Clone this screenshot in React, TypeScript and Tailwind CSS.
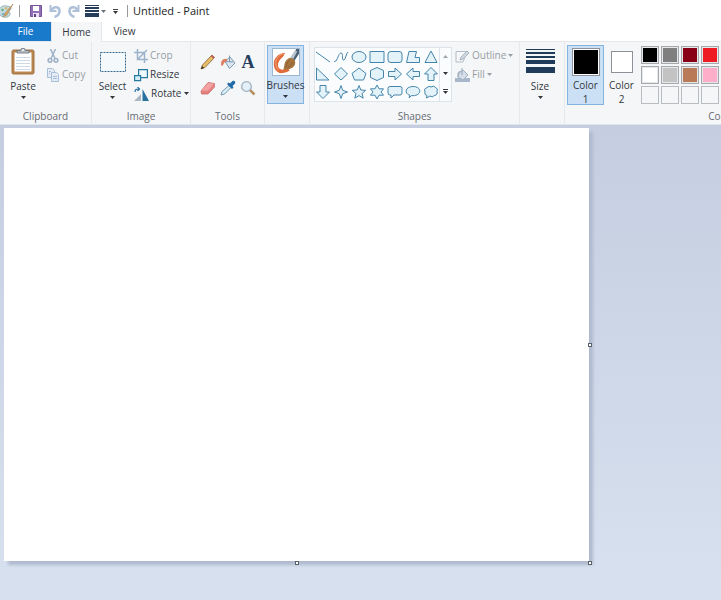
import type { ReactNode } from "react";

const shapes = [
  "M1 3 L15 13",
  "M1 12 C4 15 5 4 8 4 C11 4 8 12 11 11 C13 10 13 4 15 3",
  "M1 8 A7 5.5 0 1 0 15 8 A7 5.5 0 1 0 1 8 Z",
  "M1 2.5 H15 V13.5 H1 Z",
  "M4 2.5 H12 Q15 2.5 15 5 V11 Q15 13.5 12 13.5 H4 Q1 13.5 1 11 V5 Q1 2.5 4 2.5 Z",
  "M4 2.5 H11.5 L10 8.5 H14.5 V13.5 H1.500 Z",
  "M8 2 L14 13.5 H2 Z",
  "M1.500 2 L14 14 H1.500 Z",
  "M8 1.5 L14.5 8 L8 14 L1.500 8 Z",
  "M8 2 L15 7.500 L12.500 14 H3.500 L1 7.500 Z",
  "M8 1.500 L14.500 4.500 V11.500 L8 14.500 L1.500 11.500 V4.500 Z",
  "M1.500 5.500 H8 V2 L14.500 8 L8 14 V10.500 H1.500 Z",
  "M14.500 5.500 H8 V2 L1.500 8 L8 14 V10.500 H14.500 Z",
  "M8 1.500 L14.500 8 H11 V14.500 H5 V8 H1.500 Z",
  "M8 14.500 L14.500 8 H11 V1.500 H5 V8 H1.500 Z",
  "M8 1.500 L9.700 6.300 L14.500 8 L9.700 9.700 L8 14.500 L6.300 9.700 L1.500 8 L6.300 6.300 Z",
  "M8 1.500 L9.800 6 L14.700 6.300 L11 9.500 L12.200 14.200 L8 11.600 L3.800 14.200 L5 9.500 L1.300 6.300 L6.200 6 Z",
  "M8 1 L10 4.800 H14.500 L12 8 L14.500 11.200 H10 L8 15 L6 11.200 H1.500 L4 8 L1.500 4.800 H6 Z",
  "M3 2.500 H13 Q15 2.500 15 4.500 V9 Q15 11 13 11 H7 L4 14 V11 H3 Q1 11 1 9 V4.500 Q1 2.500 3 2.500 Z",
  "M4 14 L5 11.500 C-1 9.500 0 2.500 8 2.500 C17 2.500 17 11.500 8 11.700 L6.500 11.600 Z",
  "M4 3.500 Q6 1.500 8 3 Q11 1 12.500 3.500 Q15.500 4.500 14 7.500 Q15 11 11.500 11.500 Q9 14 7 12 L3.500 14 L4 11.500 Q1 11 2 8 Q0 5 4 3.500 Z",
];

const palette = [
  "bg-black", "bg-[#7f7f7f]", "bg-[#880015]", "bg-[#ed1c24]", "bg-[#ff7f27]",
  "bg-[#fff200]", "bg-[#22b14c]", "bg-[#00a2e8]", "bg-[#3f48cc]", "bg-[#a349a4]",
  "bg-white", "bg-[#c3c3c3]", "bg-[#b97a57]", "bg-[#ffaec9]", "bg-[#ffc90e]",
  "bg-[#efe4b0]", "bg-[#b5e61d]", "bg-[#99d9ea]", "bg-[#7092be]", "bg-[#c8bfe7]",
];

function Arrow({ className = "" }: { className?: string }) {
  return (
    <svg viewBox="0 0 5 3" className={`h-[3px] w-[5px] shrink-0 ${className}`} fill="currentColor">
      <path d="M0 0h5L2.500 3z" />
    </svg>
  );
}

function Group({ label, className = "", children }: { label?: string; className?: string; children: ReactNode }) {
  return (
    <section className={`flex shrink-0 flex-col border-r border-[#e6e8eb] ${className}`}>
      <div className="flex h-[66px] items-start">{children}</div>
      {label && <h2 className="text-center leading-4 text-[#666b72]">{label}</h2>}
    </section>
  );
}

function SmallButton({ icon, label, arrow, disabled }: { icon: ReactNode; label: string; arrow?: boolean; disabled?: boolean }) {
  return (
    <button disabled={disabled} className="flex h-[19px] items-center gap-0.5 text-[#33373d] disabled:text-[#979da5]">
      {icon}
      {label}
      {arrow && <Arrow />}
    </button>
  );
}

function PaletteIcon() {
  return (
    <svg viewBox="0 0 16 16" className="-ml-0.5 size-4">
      <path d="M1 8C1 4 5 2 9 3c4 0 5 3 3 4-2 1-1 2 0 3 1 3-3 5-7 4-3-1-4-3-4-6z" fill="#c5dbe0" stroke="#8fa9b2" strokeWidth=".8" />
      <circle cx="4.500" cy="7" r="1.300" fill="#6fae85" />
      <circle cx="8" cy="5.300" r="1.200" fill="#ddb468" />
      <circle cx="5" cy="11" r="1.300" fill="#79b2d4" />
      <path d="M15 1 7 10l-2 4 4-2z" fill="#cfa568" stroke="#a5855c" strokeWidth=".6" />
    </svg>
  );
}

function SaveIcon() {
  return (
    <svg viewBox="0 0 12 12" className="size-3">
      <path d="M.5.5h11v11h-11z" fill="#9270b8" stroke="#765399" />
      <path d="M3 1h6v5H3z" fill="#fff" />
      <path d="M3 8h6v4H3z" fill="#e9e0f2" />
      <path d="M4 9h2v3H4z" fill="#60427f" />
    </svg>
  );
}

function UndoIcon({ className = "" }: { className?: string }) {
  return (
    <svg viewBox="0 0 12 14" className={`h-3.5 w-3 ${className}`} fill="none" stroke="#afc1d9">
      <path d="M1.500 1v6h6" strokeWidth="2" />
      <path d="M2.500 6C5 2 10.500 2.500 10.500 7c0 3-2 5-5 6" strokeWidth="2.600" />
    </svg>
  );
}

function LinesIcon() {
  return (
    <svg viewBox="0 0 14 12" className="h-3 w-3.5" fill="#263e5b">
      <path d="M0 0h14v1H0zM0 2h14v2H0zM0 5h14v2H0zM0 8h14v4H0z" />
    </svg>
  );
}

function PasteIcon() {
  return (
    <svg viewBox="0 0 24 28" className="h-7 w-6">
      <rect x="1" y="3" width="22" height="24" rx="1.500" fill="#b98550" stroke="#a3743f" />
      <path d="M3.500 5.500h17v19h-17z" fill="#fff" />
      <path d="M5 10.500h14M5 13.500h14M5 16.500h14M5 19.500h14M5 22.500h14" stroke="#cddae6" />
      <path d="M6 6V3.500h3.500l1-2h3l1 2H18V6z" fill="#b4bcc3" stroke="#68727c" strokeWidth=".8" />
      <circle cx="12" cy="3" r=".9" fill="#fff" />
    </svg>
  );
}

function CutIcon() {
  return (
    <svg viewBox="0 0 14 14" className="size-3.5" fill="none" stroke="#9cb0c8" strokeWidth="1.500">
      <path d="M4.500 0 9 9.500M9.500 0 5 9.500" />
      <circle cx="4" cy="11.300" r="1.900" />
      <circle cx="10" cy="11.300" r="1.900" />
    </svg>
  );
}

function CopyIcon() {
  return (
    <svg viewBox="0 0 14 14" className="size-3.5" fill="#e2ebf6" stroke="#a9bfd8">
      <path d="M1.500.5h5l2 2v7h-7z" />
      <path d="M5.500 4.500h5l2 2v7h-7z" />
      <path d="M3 3.500h2M3 5.500h1M7 8.500h4M7 10.500h4" />
    </svg>
  );
}

function CropIcon() {
  return (
    <svg viewBox="0 0 14 14" className="size-3.5" fill="none" stroke="#9bb3ca" strokeWidth="1.500">
      <path d="M3.500 0v10.500H14M0 3.500h10.500V14M4 10l9-9" />
    </svg>
  );
}

function ResizeIcon() {
  return (
    <svg viewBox="0 0 14 14" className="size-3.5" stroke="#26799f" strokeWidth="1.200">
      <path d="M4.600 1.600h8.800v8H4.600z" fill="#edf8fc" />
      <path d="M.6 7.600h6v5h-6z" fill="#d5eef8" />
    </svg>
  );
}

function RotateIcon() {
  return (
    <svg viewBox="0 0 15 14" className="h-3.5 w-[15px]">
      <path d="M8.500 2v12H15z" fill="#28719f" />
      <path d="M7 7v7H0z" fill="#abb8c4" />
      <path d="M1 5c0-2.500 1-3 4-3M3.500 0l2 2-2 2" fill="none" stroke="#28719f" strokeWidth="1.200" />
    </svg>
  );
}

function BrushIcon() {
  return (
    <svg viewBox="0 0 28 28" className="size-7 border border-[#9fb8d0] bg-white">
      <path d="M13 4C8 4 2 8 1 14c-1 7 3 12 8 12 4 0 7-1 9-3l-3-3c-3 3-7 3-9 0-2-4 1-9 5-12z" fill="#e06a38" />
      <path d="M12 5C7 6 3 10 3 15c0 3 1 6 3 8" fill="none" stroke="#f3a57f" />
      <path d="M25 0h3v5l-5 8-4-3z" fill="#4b6178" />
      <path d="m24 1-6 9 3 2 5-9z" fill="#b9c6d2" />
      <path d="M17 10c4-1 7 1 7 5-1 6-6 7-13 7 2-3 0-9 6-12z" fill="#a5743f" />
      <path d="M18 12c-3 2-3 5-4 8M21 14c-1 3-3 5-5 6" fill="none" stroke="#835528" strokeWidth=".7" />
    </svg>
  );
}

const tools = [
  {
    name: "Pencil",
    icon: (
      <>
        <path d="M1 15l1.500-4L12 1l2.500 2.500-9.500 10z" fill="#e7bd67" stroke="#8f6b37" strokeWidth=".9" />
        <path d="m11.500 1.500 2.500 2.500" stroke="#bc625c" strokeWidth="2" />
        <path d="m1 15 1-3 2 2z" fill="#34302b" />
      </>
    ),
  },
  {
    name: "Fill with color",
    icon: (
      <>
        <path d="M5 7.500 10 3l5 6-5.500 5.500z" fill="#dce8f1" stroke="#7f98ad" />
        <path d="M9.500 8V1.500M5.500 7.500 13 8" fill="none" stroke="#7f98ad" />
        <path d="M7 5C3 4 0 7 1.500 12 4 12 3 8 7 7z" fill="#de8062" />
      </>
    ),
  },
  {
    name: "Text",
    icon: (
      <text x="8" y="14" textAnchor="middle" fontSize="18" fontWeight="700" fill="#263f5e" className="font-['Liberation_Serif',serif]">
        A
      </text>
    ),
  },
  {
    name: "Eraser",
    icon: (
      <>
        <path d="M1 11 8 2.500l6.500 1V7L8 14H1.500z" fill="#e67f7f" stroke="#c67070" strokeWidth=".8" />
        <path d="M1.500 10.500 8 3l6 .8-6 7z" fill="#f2a3a1" />
      </>
    ),
  },
  {
    name: "Color picker",
    icon: (
      <>
        <path d="m1 15 1-3.500 7-6 2 2-6.500 6.500z" fill="#d8edf8" stroke="#6a8ea8" strokeWidth=".9" />
        <path d="m7 4 5 5 1.500-1.500-1-1.500 2.500-2.500c1-2-1-3.500-2.500-2.500L10 3.500 8.500 2.500z" fill="#1f6aa8" />
      </>
    ),
  },
  {
    name: "Magnifier",
    icon: (
      <>
        <path d="m10 10 4.500 4.500" stroke="#b79065" strokeWidth="2.500" />
        <circle cx="6.500" cy="6.500" r="4.800" fill="#e4f1fa" stroke="#9fb0be" strokeWidth="1.300" />
      </>
    ),
  },
];

function OutlineIcon() {
  return (
    <svg viewBox="0 0 15 14" className="h-3.5 w-[15px]">
      <path d="M1 2.500h11L8 13H1z" fill="#f5f7f9" stroke="#b3bdc7" />
      <path d="m5 11 1-3 6-6 2 2-6 6z" fill="#ced7df" stroke="#9eabb7" strokeWidth=".8" />
    </svg>
  );
}

function FillIcon() {
  return (
    <svg viewBox="0 0 15 14" className="h-3.5 w-[15px]">
      <path d="M0 10h15v4H0z" fill="#a8b7ca" />
      <path d="m4 5 4-3 5 5-5 5-5-3z" fill="#d3dce7" stroke="#a1b1c3" />
      <path d="M3 9c-1-4 1-6 4-6V0M7 3v4" fill="none" stroke="#a1b1c3" strokeWidth="1.200" />
    </svg>
  );
}

function Handle({ className }: { className: string }) {
  return <span className={`absolute size-1 border border-[#586069] bg-white ${className}`} />;
}

export default function App() {
  return (
    <main className="flex min-h-screen flex-col overflow-hidden bg-white font-['Open_Sans',sans-serif] text-[10px] text-[#33373d]">
      <header className="flex h-[22px] items-center">
        <PaletteIcon />
        <span className="ml-[5px] h-3 w-px bg-[#9a9a9a]" />
        <button aria-label="Save" className="ml-2.5"><SaveIcon /></button>
        <button aria-label="Undo" className="ml-[7px]"><UndoIcon /></button>
        <button aria-label="Redo" className="ml-[7px]"><UndoIcon className="-scale-x-100" /></button>
        <button aria-label="Line size" className="ml-[5px] flex items-center gap-0.5">
          <LinesIcon />
          <Arrow className="text-[#68717b]" />
        </button>
        <button aria-label="Customize toolbar" className="ml-[7px] flex flex-col items-center gap-px">
          <span className="h-px w-[5px] bg-[#444]" />
          <Arrow className="text-[#333]" />
        </button>
        <span className="ml-[9px] h-3 w-px bg-[#9a9a9a]" />
        <h1 className="ml-[5px] text-[11px] text-[#222]">Untitled - Paint</h1>
      </header>

      <nav className="flex h-5 border-b border-[#e5e7ea]">
        <button className="w-[51px] bg-[#1979ca] text-white">File</button>
        <button className="-mb-px w-[51px] border-x border-[#e5e7ea] bg-[#f5f6f8]">Home</button>
        <button className="w-[45px]">View</button>
      </nav>

      <div className="flex h-[83px] overflow-hidden border-b border-[#dfe4ec] bg-[#f5f6f8]">
        <Group label="Clipboard" className="w-[92px]">
          <button className="mt-[5px] flex w-[46px] flex-col items-center">
            <PasteIcon />
            <span className="mt-[3px] leading-4">Paste</span>
            <Arrow className="mt-0.5" />
          </button>
          <div className="mt-1 flex flex-col">
            <SmallButton icon={<CutIcon />} label="Cut" disabled />
            <SmallButton icon={<CopyIcon />} label="Copy" disabled />
          </div>
        </Group>

        <Group label="Image" className="w-[99px]">
          <button className="mt-[10px] flex w-[41px] flex-col items-center">
            <svg viewBox="0 0 26 20" className="h-5 w-[26px]">
              <path d="M.5.5h25v19H.5z" fill="#f4f9fc" stroke="#36688f" strokeDasharray="2 1" />
            </svg>
            <span className="mt-[6px] leading-4">Select</span>
            <Arrow className="mt-0.5" />
          </button>
          <div className="mt-1 ml-px flex flex-col">
            <SmallButton icon={<CropIcon />} label="Crop" disabled />
            <SmallButton icon={<ResizeIcon />} label="Resize" />
            <SmallButton icon={<RotateIcon />} label="Rotate" arrow />
          </div>
        </Group>

        <Group label="Tools" className="w-[74px]">
          <div className="mt-3 ml-[9px] grid grid-cols-3 gap-x-1 gap-y-[10px]">
            {tools.map((tool) => (
              <button key={tool.name} aria-label={tool.name}>
                <svg viewBox="0 0 16 16" className="size-4 overflow-visible">{tool.icon}</svg>
              </button>
            ))}
          </div>
        </Group>

        <Group className="w-[45px]">
          <button className="mt-[3px] ml-0.5 flex h-[59px] w-[37px] flex-col items-center border border-[#84b3df] bg-[#cce0f5]">
            <span className="mt-0.5"><BrushIcon /></span>
            <span className="mt-px leading-4">Brushes</span>
            <Arrow className="mt-0.5" />
          </button>
        </Group>

        <Group label="Shapes" className="w-[210px]">
          <div className="mt-[5px] ml-1 flex h-[55px] border border-[#dce3e9] bg-[#fafcfd]">
            <div className="grid grid-cols-7 gap-x-0.5">
              {shapes.map((d) => (
                <button key={d} aria-label="Shape" className="h-[17px] w-4">
                  <svg viewBox="0 0 16 16" className="size-4" fill="#e4f3fa" stroke="#4585aa" strokeWidth="1">
                    <path d={d} fill={d.endsWith("Z") ? undefined : "none"} />
                  </svg>
                </button>
              ))}
            </div>
            <div className="flex w-3 flex-col items-center justify-around border-l border-[#dce3e9]">
              <button aria-label="Scroll up"><Arrow className="rotate-180 text-[#9da4aa]" /></button>
              <button aria-label="Scroll down"><Arrow /></button>
              <button aria-label="More shapes" className="flex flex-col items-center gap-px">
                <span className="h-px w-[5px] bg-[#33373d]" />
                <Arrow />
              </button>
            </div>
          </div>
          <div className="mt-1 ml-[3px] flex flex-col">
            <SmallButton icon={<OutlineIcon />} label="Outline" arrow disabled />
            <SmallButton icon={<FillIcon />} label="Fill" arrow disabled />
          </div>
        </Group>

        <Group className="w-[45px]">
          <button className="mt-[7px] flex w-10 flex-col items-center">
            <svg viewBox="0 0 29 24" className="h-6 w-[29px]" fill="#213c5a">
              <path d="M0 0h29v1H0zM0 3h29v2H0zM0 7h29v2H0zM0 11h29v4H0zM0 18h29v6H0z" />
            </svg>
            <span className="mt-[5px] leading-4">Size</span>
            <Arrow className="mt-0.5" />
          </button>
        </Group>

        <Group label="Colors" className="w-[317px]">
          <button className="mt-[3px] ml-0.5 flex h-[60px] w-[37px] flex-col items-center border border-[#84b3df] bg-[#cce0f5]">
            <span className="mt-0.5 size-7 shrink-0 border border-[#8d9299] bg-black shadow-[inset_0_0_0_1px_#ffffff]" />
            <span className="mt-0.5 leading-[14px]">
              Color
              <br />1
            </span>
          </button>
          <button className="mt-1 flex w-[35px] flex-col items-center">
            <span className="mt-[5px] size-[22px] shrink-0 border border-[#8d9299] bg-white" />
            <span className="mt-[5px] leading-[14px]">
              Color
              <br />2
            </span>
          </button>
          <div className="mt-1 ml-0.5 grid grid-cols-10 gap-0.5">
            {palette.map((color) => (
              <button key={color} aria-label="Color swatch" className={`size-[18px] border border-[#a5a8ac] shadow-[inset_0_0_0_1px_#e6e7e9] ${color}`} />
            ))}
            {palette.slice(10).map((color) => (
              <button key={color} aria-label="Custom color" className="size-[18px] border border-[#b9bcc0]" />
            ))}
          </div>
        </Group>
      </div>

      <div className="grow bg-linear-to-b from-[#c5cee0] to-[#d7e1ef] pt-[3px] pr-[132px] pb-[39px] pl-1">
        <div className="relative h-[433px] bg-white shadow-[4px_4px_3px_#b0bace]">
          <Handle className="top-[215px] -right-[3px]" />
          <Handle className="-bottom-1 left-1/2 -translate-x-1/2" />
          <Handle className="-right-[3px] -bottom-1" />
        </div>
      </div>
    </main>
  );
}
